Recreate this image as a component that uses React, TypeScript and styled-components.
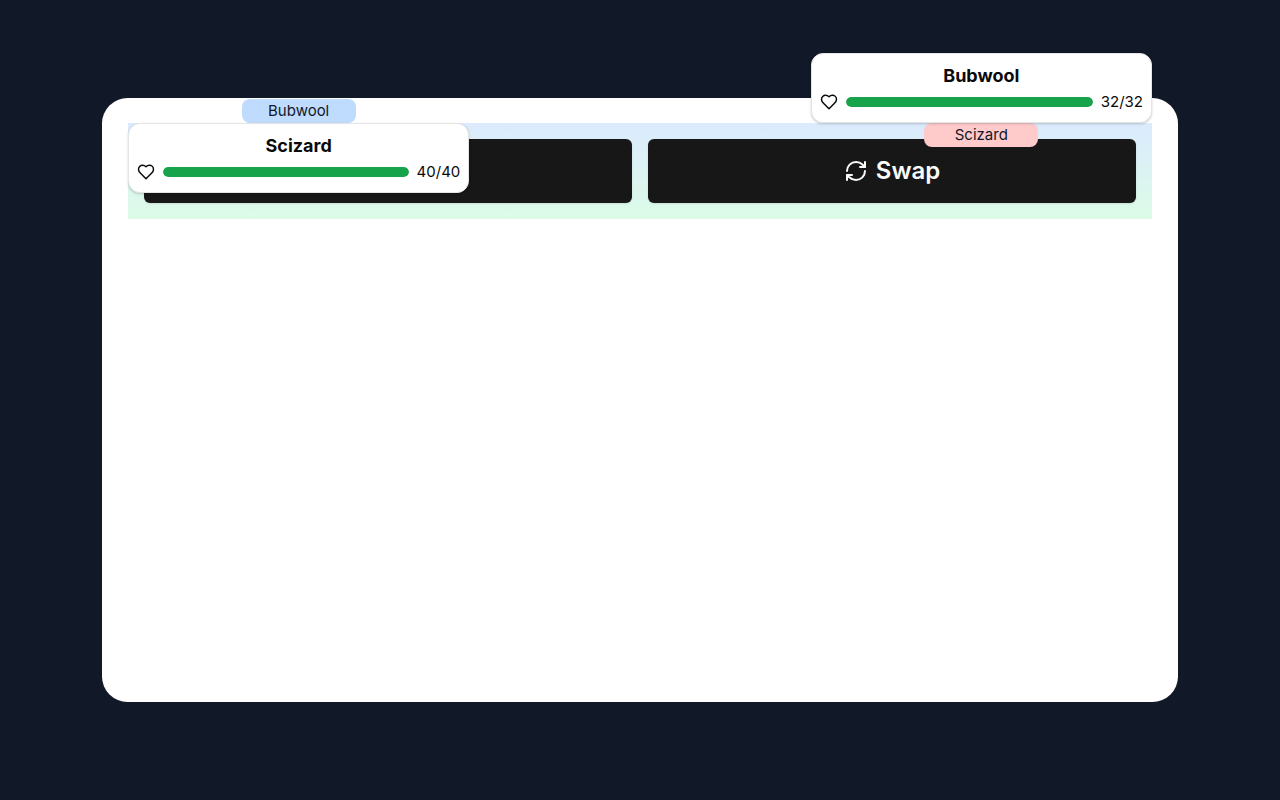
import React from "react";
import styled, { createGlobalStyle } from "styled-components";

const GlobalStyle = createGlobalStyle`
  *, *::before, *::after { box-sizing: border-box; }
  body {
    margin: 0;
    background: #111827;
    color: #0a0a0a;
    font-family: Inter, "Liberation Sans", sans-serif;
    font-size: 15px;
    line-height: 24px;
  }
`;

const Page = styled.main`
  min-height: 100vh;
  display: flex;
  align-items: center;
  justify-content: center;
`;

const Screen = styled.section`
  width: 84vw;
  aspect-ratio: 16 / 9;
  padding: 2vw;
  border-radius: 2vw;
  background: #fff;
`;

const Arena = styled.div`
  position: relative;
  background: linear-gradient(to bottom, #dbeafe, #dcfce7);
`;

const Actions = styled.div`
  display: grid;
  grid-template-columns: 1fr 1fr;
  gap: 16px;
  padding: 16px;
`;

const ActionButton = styled.button`
  display: flex;
  align-items: center;
  justify-content: center;
  gap: 8px;
  height: 64px;
  border: 0;
  border-radius: 6px;
  background: #171717;
  color: #fafafa;
  font-family: inherit;
  font-size: 24px;
  font-weight: 600;
  line-height: 32px;
  box-shadow: 0 1px 2px rgba(0, 0, 0, 0.1);
`;

type Side = "player" | "opponent";

const Combatant = styled.article<{ $side: Side }>`
  position: absolute;
  width: calc(100% / 3);
  ${({ $side }) => ($side === "player" ? "top: 0; left: 0;" : "bottom: 100%; right: 0;")}
`;

const Card = styled.div`
  position: relative;
  padding: 8px;
  border: 1px solid #e5e5e5;
  border-radius: 12px;
  background: #fff;
  box-shadow: 0 1px 3px rgba(0, 0, 0, 0.1), 0 1px 2px rgba(0, 0, 0, 0.1);
`;

const Name = styled.h2`
  margin: 0;
  text-align: center;
  font-size: 18px;
  font-weight: 700;
  line-height: 28px;
`;

const Health = styled.div`
  display: flex;
  align-items: center;
  gap: 8px;
`;

const Track = styled.div`
  flex: 1;
  height: 10px;
  border-radius: 5px;
  overflow: hidden;
  background: #e5e5e5;
`;

const Fill = styled.div`
  height: 100%;
  border-radius: 5px;
  background: #16a34a;
`;

const Sprite = styled.div<{ $side: Side }>`
  position: absolute;
  left: calc(100% / 3);
  width: calc(100% / 3);
  border-radius: 8px;
  text-align: center;
  color: #111827;
  ${({ $side }) =>
    $side === "player"
      ? "bottom: 100%; background: #bfdbfe;"
      : "top: 100%; background: #fecaca;"}
`;

const HeartIcon = () => (
  <svg width="18" height="18" viewBox="0 0 24 24" fill="none" stroke="currentColor" strokeWidth="2" strokeLinecap="round" strokeLinejoin="round" aria-hidden="true">
    <path d="M19 14c1.49-1.46 3-3.21 3-5.5A5.5 5.5 0 0 0 16.5 3c-1.76 0-3 .5-4.5 2-1.5-1.5-2.74-2-4.5-2A5.5 5.5 0 0 0 2 8.5c0 2.3 1.5 4.05 3 5.5l7 7Z" />
  </svg>
);

const SwapIcon = () => (
  <svg width="24" height="24" viewBox="0 0 24 24" fill="none" stroke="currentColor" strokeWidth="2" strokeLinecap="round" strokeLinejoin="round" aria-hidden="true">
    <path d="M3 12a9 9 0 0 1 9-9 9.75 9.75 0 0 1 6.74 2.74L21 8" />
    <path d="M21 3v5h-5" />
    <path d="M21 12a9 9 0 0 1-9 9 9.75 9.75 0 0 1-6.74-2.74L3 16" />
    <path d="M8 16H3v5" />
  </svg>
);

interface FighterProps {
  side: Side;
  name: string;
  sprite: string;
  hp: number;
  maxHp: number;
}

const Fighter = ({ side, name, sprite, hp, maxHp }: FighterProps) => (
  <Combatant $side={side}>
    <Sprite $side={side}>{sprite}</Sprite>
    <Card>
      <Name>{name}</Name>
      <Health>
        <HeartIcon />
        <Track>
          <Fill style={{ width: `${(hp / maxHp) * 100}%` }} />
        </Track>
        <span>{hp}/{maxHp}</span>
      </Health>
    </Card>
  </Combatant>
);

export default function App() {
  return (
    <Page>
      <GlobalStyle />
      <Screen>
        <Arena>
          <Actions>
            <ActionButton type="button" aria-label="Attack" />
            <ActionButton type="button">
              <SwapIcon />
              Swap
            </ActionButton>
          </Actions>
          <Fighter side="opponent" name="Bubwool" sprite="Scizard" hp={32} maxHp={32} />
          <Fighter side="player" name="Scizard" sprite="Bubwool" hp={40} maxHp={40} />
        </Arena>
      </Screen>
    </Page>
  );
}
